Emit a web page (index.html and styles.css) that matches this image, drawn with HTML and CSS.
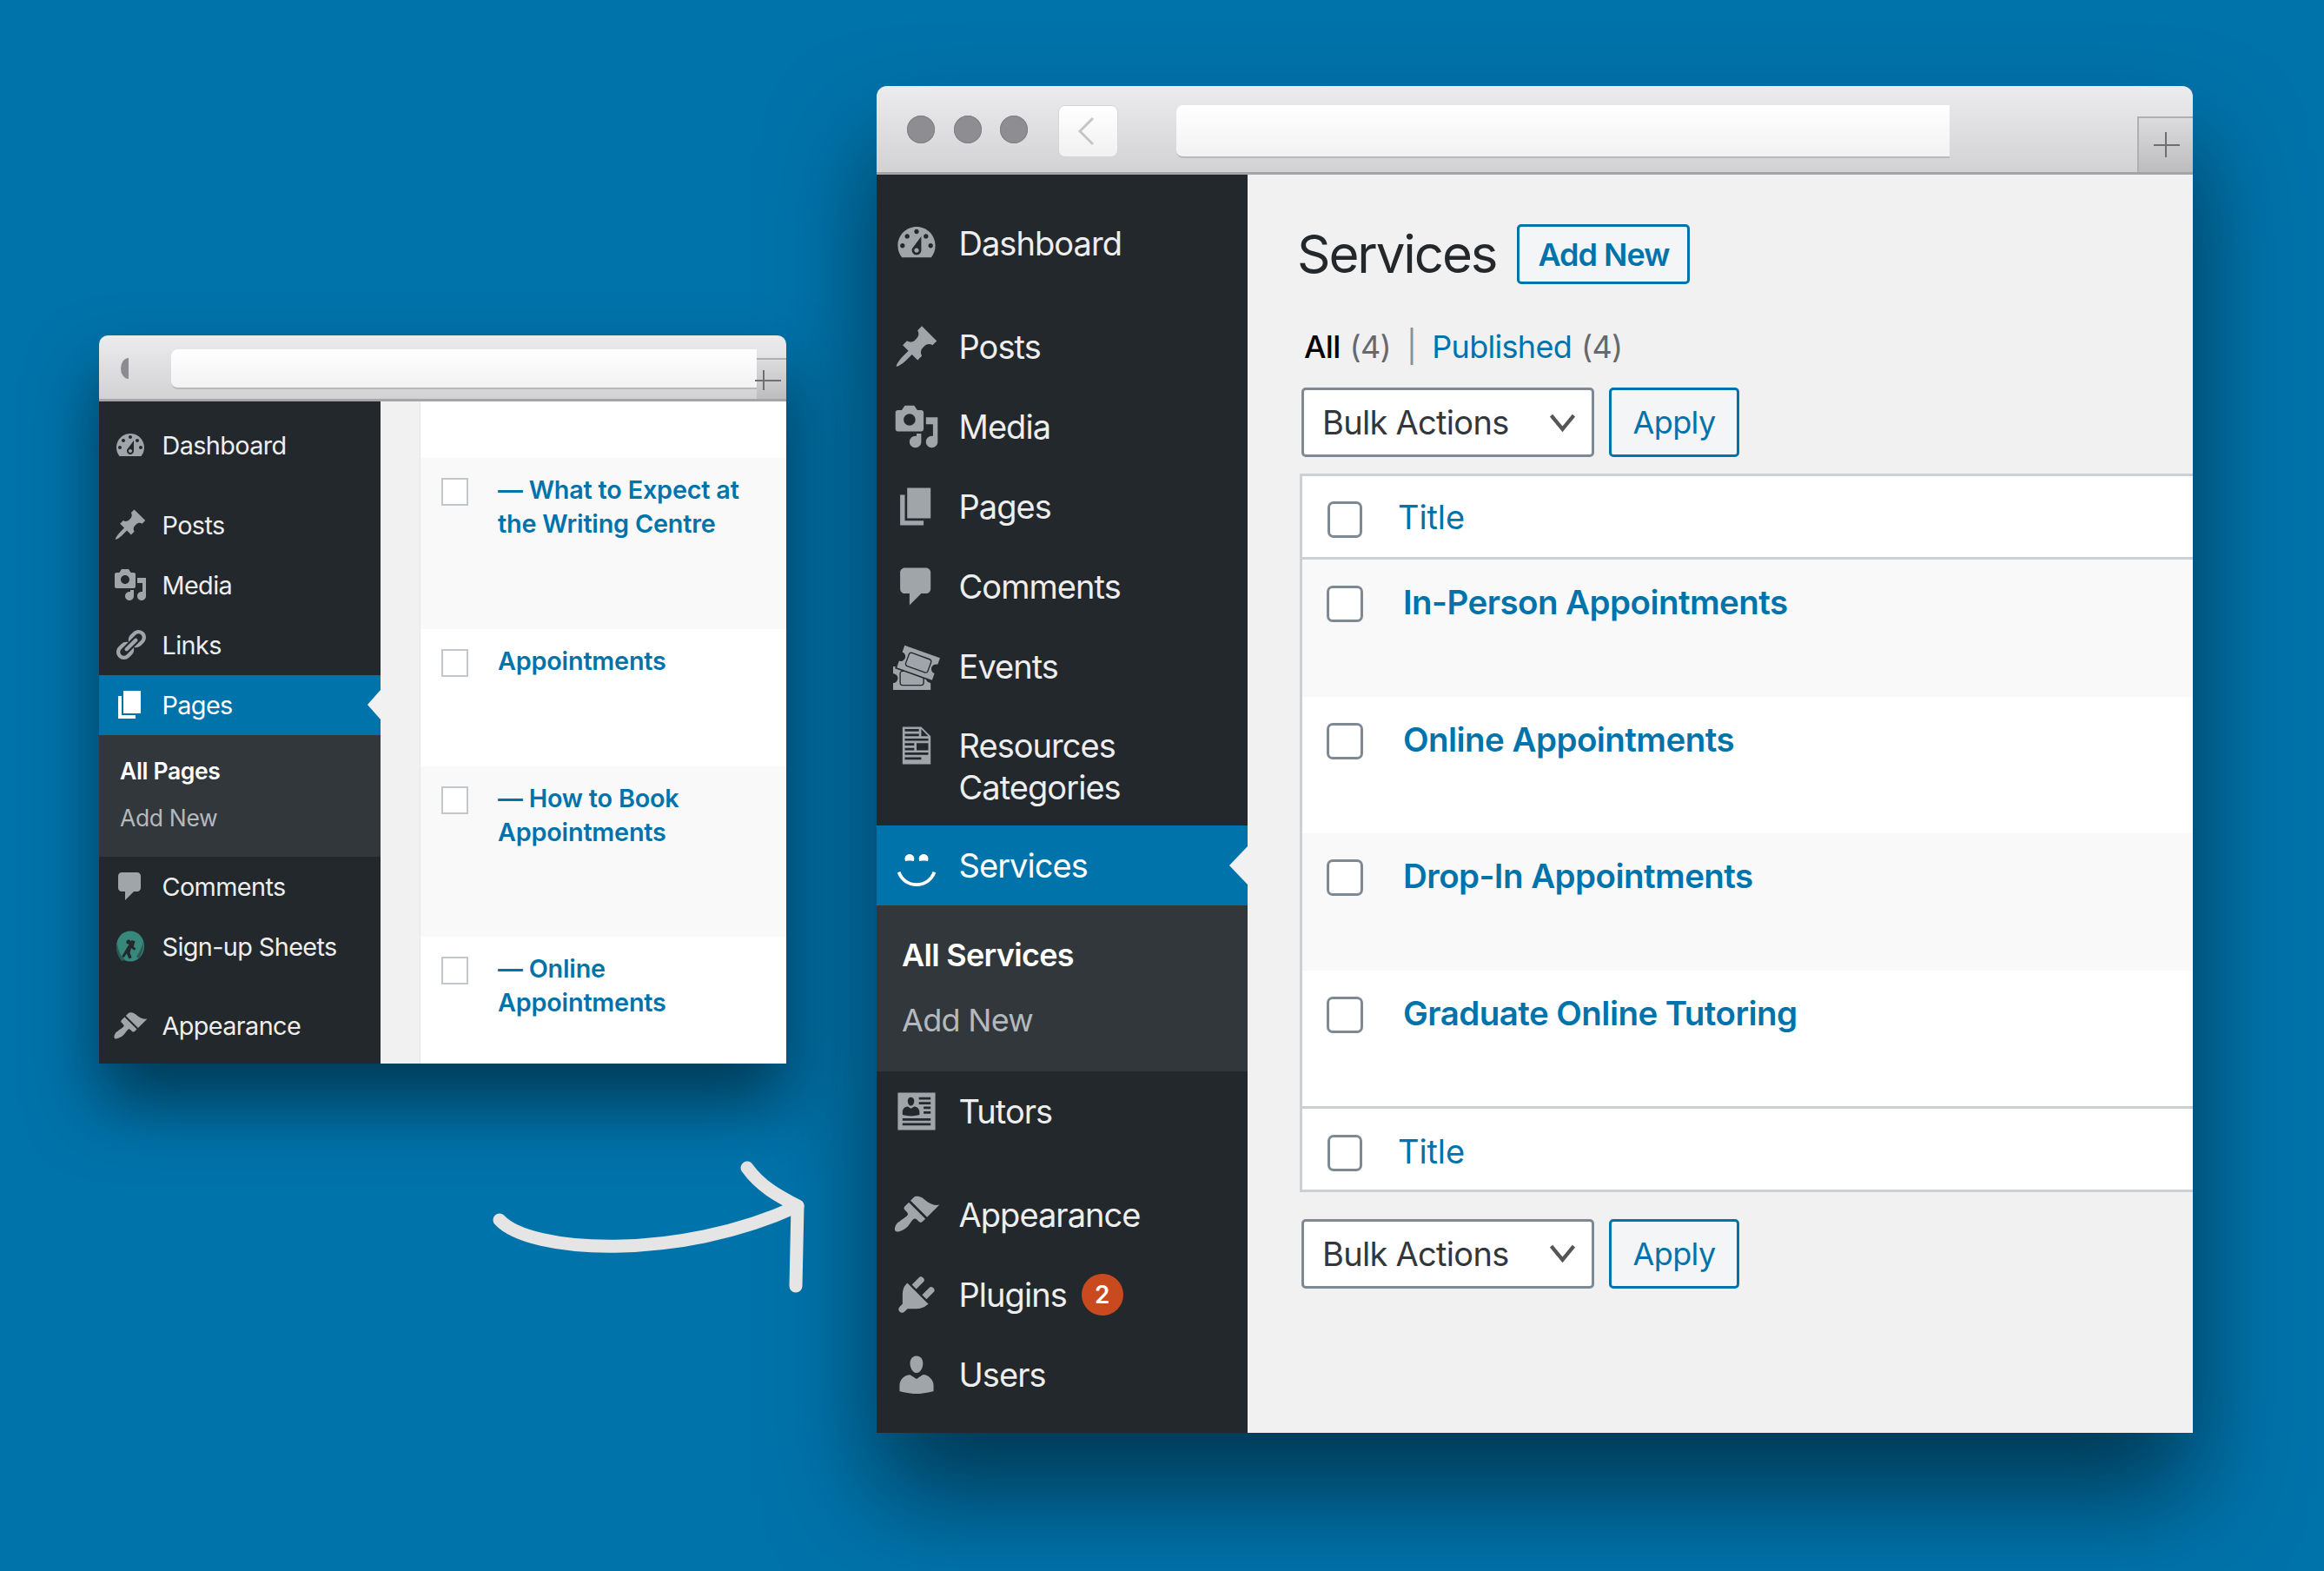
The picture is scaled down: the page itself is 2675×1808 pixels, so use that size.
FILE: index.html
```html
<!DOCTYPE html>
<html lang="en">
<head>
<meta charset="utf-8">
<title>Services</title>
<link rel="stylesheet" href="styles.css">
</head>
<body>
<svg class="sprite" aria-hidden="true">
  <symbol id="i-dashboard" viewBox="0 0 20 20"><path fill-rule="evenodd" d="M3.76 16h12.48c1.1-1.37 1.76-3.11 1.76-5 0-4.42-3.58-8-8-8s-8 3.58-8 8c0 1.89.66 3.63 1.76 5zM10 4c.55 0 1 .45 1 1s-.45 1-1 1-1-.45-1-1 .45-1 1-1zM6 6c.55 0 1 .45 1 1s-.45 1-1 1-1-.45-1-1 .45-1 1-1zm8 0c.55 0 1 .45 1 1s-.45 1-1 1-1-.45-1-1 .45-1 1-1zm-5.37 5.55L12 7v6c0 1.1-.9 2-2 2s-2-.9-2-2c0-.57.24-1.08.63-1.45zM4 10c.55 0 1 .45 1 1s-.45 1-1 1-1-.45-1-1 .45-1 1-1zm12 0c.55 0 1 .45 1 1s-.45 1-1 1-1-.45-1-1 .45-1 1-1zm-5 3c0-.55-.45-1-1-1s-1 .45-1 1 .45 1 1 1 1-.45 1-1z"/></symbol>
  <symbol id="i-post" viewBox="0 0 20 20"><path d="M10.44 3.02l1.82-1.82 6.36 6.35-1.83 1.82c-1.05-.68-2.48-.57-3.41.36l-.75.75c-.92.93-1.04 2.35-.35 3.41l-1.83 1.82-2.41-2.41-2.8 2.79c-.42.42-3.38 2.71-3.8 2.29s1.86-3.39 2.28-3.81l2.79-2.79L4.1 9.36l1.83-1.82c1.05.69 2.48.57 3.4-.36l.75-.75c.93-.92 1.05-2.35.36-3.41z"/></symbol>
  <symbol id="i-media" viewBox="0 0 20 20"><path fill-rule="evenodd" d="M13 11V4c0-.55-.45-1-1-1h-1.67L9 1H5L3.67 3H2c-.55 0-1 .45-1 1v7c0 .55.45 1 1 1h10c.55 0 1-.45 1-1zM7 4.5c1.38 0 2.5 1.12 2.5 2.5S8.38 9.5 7 9.5 4.5 8.38 4.5 7 5.62 4.5 7 4.5zM14 6h5v10.5c0 1.38-1.12 2.5-2.5 2.5S14 17.88 14 16.5s1.12-2.5 2.5-2.5c.17 0 .34.02.5.05V9h-3V6zm-4 8.05V13h2v3.5c0 1.38-1.12 2.5-2.5 2.5S7 17.88 7 16.5 8.12 14 9.5 14c.17 0 .34.02.5.05z"/></symbol>
  <symbol id="i-links" viewBox="0 0 20 20"><path d="M17.74 2.76c1.68 1.69 1.68 4.41 0 6.1l-1.53 1.52c-1.12 1.12-2.7 1.47-4.14 1.09l2.62-2.61.76-.77.76-.76c.84-.84.84-2.2 0-3.04-.84-.85-2.2-.85-3.04 0l-.77.76-3.38 3.38c-.37-1.44-.02-3.02 1.1-4.14l1.52-1.53c1.69-1.68 4.42-1.68 6.1 0zM8.59 13.43l5.34-5.34c.42-.42.42-1.1 0-1.52-.44-.43-1.13-.39-1.53 0l-5.33 5.34c-.42.42-.42 1.1 0 1.52.44.43 1.13.39 1.52 0zm-.76 2.29l4.14-4.15c.38 1.44.03 3.02-1.09 4.14l-1.52 1.53c-1.69 1.68-4.41 1.68-6.1 0-1.68-1.68-1.68-4.42 0-6.1l1.53-1.52c1.12-1.12 2.7-1.47 4.14-1.1l-4.14 4.15c-.85.84-.85 2.2 0 3.05.84.84 2.2.84 3.04 0z"/></symbol>
  <symbol id="i-page" viewBox="0 0 20 20"><path d="M6 15V2h10v13H6zm-1 1h8v2H3V5h2v11z"/></symbol>
  <symbol id="i-comments" viewBox="0 0 20 20"><path d="M5 2h9c1.1 0 2 .9 2 2v7c0 1.1-.9 2-2 2h-2l-5 5v-5H5c-1.1 0-2-.9-2-2V4c0-1.1.9-2 2-2z"/></symbol>
  <symbol id="i-tickets" viewBox="0 0 20 20"><path fill-rule="evenodd" d="M20 6.38L18.99 9.2v-.01c-.52-.19-1.03-.16-1.53.08s-.85.62-1.04 1.14-.16 1.03.07 1.53c.24.5.62.84 1.15 1.03v.01l-1.01 2.82-15.06-5.38.99-2.79c.52.19 1.03.16 1.53-.08.5-.23.84-.61 1.03-1.13s.16-1.03-.08-1.53c-.23-.49-.61-.83-1.13-1.02L4.93 1zm-4.97 5.69l1.37-3.76c.12-.31.1-.65-.04-.95s-.39-.53-.7-.65L8.14 3.98c-.64-.23-1.37.12-1.6.74L5.17 8.48c-.24.65.1 1.37.74 1.6l7.52 2.74c.14.05.28.08.43.08.52 0 1-.33 1.17-.83zM7.97 4.45l7.51 2.73c.19.07.34.21.43.39.08.18.09.38.02.57l-1.37 3.76c-.13.38-.58.59-.96.45L6.09 9.61c-.38-.14-.59-.57-.45-.96l1.37-3.76c.1-.29.39-.49.7-.49.09 0 .17.02.26.05zm6.82 12.14c.35.27.75.41 1.2.41H16v3H0v-2.96c.55 0 1.03-.2 1.41-.59.39-.38.59-.86.59-1.41s-.2-1.02-.59-1.41-.86-.59-1.41-.59V10h1.05l-.28.8 2.87 1.02c-.51.16-.89.62-.89 1.18v4c0 .69.56 1.25 1.25 1.25h8c.69 0 1.25-.56 1.25-1.25v-1.75l.83.3c.12.43.36.78.71 1.04zM3.25 17v-4c0-.41.34-.75.75-.75h.83l7.92 2.83V17c0 .41-.34.75-.75.75H4c-.41 0-.75-.34-.75-.75z"/></symbol>
  <symbol id="i-document" viewBox="0 0 20 20"><path fill-rule="evenodd" d="M12 2l4 4v12H4V2h8zM5 3v1h6V3H5zm7 3h3l-3-3v3zM5 5v1h6V5H5zm10 3V7H5v1h10zM5 9v1h4V9H5zm10 3V9h-5v3h5zM5 11v1h4v-1H5zm10 3v-1H5v1h10zm-3 2v-1H5v1h7z"/></symbol>
  <symbol id="i-smiley" viewBox="0 0 20 20"><path d="M7 5.2c1.1 0 2 .89 2 2 0 .37-.11.71-.28 1C8.72 8.2 8 8 7 8s-1.72.2-1.72.2c-.17-.29-.28-.63-.28-1 0-1.11.9-2 2-2zm6 0c1.11 0 2 .89 2 2 0 .37-.11.71-.28 1 0 0-.72-.2-1.72-.2s-1.72.2-1.72.2c-.17-.29-.28-.63-.28-1 0-1.11.89-2 2-2zm-3 13.7c3.72 0 7.03-2.36 8.23-5.88l-1.32-.46C15.9 15.52 13.12 17.5 10 17.5s-5.9-1.98-6.91-4.94l-1.32.46c1.2 3.52 4.51 5.88 8.23 5.88z"/></symbol>
  <symbol id="i-id" viewBox="0 0 20 20"><path fill-rule="evenodd" d="M18 18H2V2h16v16zM8.05 7.53c.13-.07.24-.15.33-.24.09-.1.17-.21.24-.34.07-.14.13-.26.17-.37s.07-.22.1-.34L8.95 6c0-.04.01-.07.01-.09.05-.32.03-.61-.04-.9-.08-.28-.23-.52-.46-.72C8.23 4.1 7.95 4 7.6 4c-.2 0-.39.04-.56.11-.17.08-.31.18-.41.3-.11.13-.2.27-.27.44-.07.16-.11.33-.12.51s0 .36.01.55l.02.09c.01.06.03.15.06.25s.06.21.1.33.1.25.17.37c.08.12.16.23.25.33s.2.19.34.25c.13.06.28.09.43.09s.3-.03.43-.09zM16 5V4h-5v1h5zm0 2V6h-5v1h5zM7.62 8.83l-1.38-.88c-.41 0-.79.11-1.14.32-.35.22-.62.5-.81.85-.19.34-.29.7-.29 1.07v1.25l.2.05c.13.04.31.09.55.14.24.06.51.12.8.17.29.06.62.1 1 .14.37.04.73.06 1.07.06s.69-.02 1.07-.06.7-.09.98-.14c.27-.05.54-.1.82-.17.27-.06.45-.11.54-.13.09-.03.16-.05.21-.06v-1.25c0-.36-.1-.72-.31-1.07s-.49-.64-.84-.86-.72-.33-1.11-.33zM16 9V8h-3v1h3zm0 2v-1h-3v1h3zm0 3v-1H4v1h12zm0 2v-1H4v1h12z"/></symbol>
  <symbol id="i-appearance" viewBox="0 0 20 20"><path d="M14.48 11.06L7.41 3.99l1.5-1.5c.5-.56 2.3-.47 3.51.32 1.21.8 1.43 1.28 2.91 2.1 1.18.64 2.45 1.26 4.45.85zm-.71.71L6.7 4.7 4.93 6.47c-.39.39-.39 1.02 0 1.41l1.06 1.06c.39.39.39 1.03 0 1.42-.6.6-1.43 1.11-2.21 1.69-.35.26-.7.53-1.01.84C1.43 13.23.1 16.07.98 16.95c.88.88 3.72-.45 5.06-1.79.31-.31.58-.66.84-1.01.58-.78 1.09-1.61 1.69-2.21.39-.39 1.03-.39 1.42 0l1.06 1.06c.39.39 1.02.39 1.41 0z"/></symbol>
  <symbol id="i-plugins" viewBox="0 0 20 20"><path d="M13.11 4.36L9.87 7.6 8 5.73l3.24-3.24c.35-.34 1.05-.2 1.56.32.52.51.66 1.21.31 1.55zm-8 1.77l.91-1.12 9.01 9.01-1.19.84c-.71.71-2.63 1.16-3.82 1.16H6.14L4.9 17.26c-.59.59-1.54.59-2.12 0-.59-.58-.59-1.53 0-2.12l1.24-1.24v-3.88c0-1.13.4-3.19 1.09-3.89zm7.26 3.97l3.24-3.24c.34-.35 1.04-.21 1.55.31.52.51.66 1.21.31 1.55l-3.24 3.25z"/></symbol>
  <symbol id="i-users" viewBox="0 0 20 20"><path d="M10 9.25c-2.27 0-2.73-3.44-2.73-3.44C7 4.02 7.82 2 9.97 2c2.16 0 2.98 2.02 2.71 3.81 0 0-.41 3.44-2.68 3.44zm0 2.57L12.72 10c2.39 0 4.52 2.33 4.52 4.53v2.49s-3.65 1.13-7.24 1.13c-3.65 0-7.24-1.13-7.24-1.13v-2.49c0-2.25 1.94-4.48 4.47-4.48z"/></symbol>
  <symbol id="i-signup" viewBox="0 0 20 20"><ellipse cx="10" cy="10" rx="8" ry="8.800" fill="#37877a"/><path d="M2.500 8C3 12 4 15 7 18l-2 .5C2 15 1.500 11 2.500 8zM17.500 7c.5 3.500-.5 7-2.500 10l-1.500-1c2-3 3.500-6 4-9z" fill="#2a5c56"/><path d="M10.800 6.500l2 .6-.9 3 1.300 1.300-1 1-1.700-1.400-.7 2.800 1 2.800-1.600.5-1.300-3-1.700 2.500-1-.9 2.600-4.500z" fill="#23282d"/><circle cx="9" cy="7.500" r="1.300" fill="#23282d"/></symbol>
  <symbol id="i-chevron" viewBox="0 0 20 20"><path d="M3 5.500l7 8.500 7-8.500" fill="none" stroke="currentColor" stroke-width="2.300"/></symbol>
</svg>

<main class="desk">

  <section class="win win-small">
    <header class="chrome chrome-small">
      <span class="back-half"></span>
      <span class="url url-small"></span>
      <span class="plus plus-small"></span>
    </header>
    <div class="app">
      <nav class="side side-small">
        <a class="item"><svg class="ic"><use href="#i-dashboard"/></svg><span>Dashboard</span></a>
        <a class="item sep"><svg class="ic"><use href="#i-post"/></svg><span>Posts</span></a>
        <a class="item"><svg class="ic"><use href="#i-media"/></svg><span>Media</span></a>
        <a class="item"><svg class="ic"><use href="#i-links"/></svg><span>Links</span></a>
        <a class="item active"><svg class="ic"><use href="#i-page"/></svg><span>Pages</span></a>
        <div class="sub">
          <a class="sub-on">All Pages</a>
          <a class="sub-off">Add New</a>
        </div>
        <a class="item"><svg class="ic"><use href="#i-comments"/></svg><span>Comments</span></a>
        <a class="item"><svg class="ic"><use href="#i-signup"/></svg><span>Sign-up Sheets</span></a>
        <a class="item sep"><svg class="ic"><use href="#i-appearance"/></svg><span>Appearance</span></a>
      </nav>
      <div class="gutter"></div>
      <div class="panel">
        <div class="p-row p-alt p-tall"><input class="p-check" type="checkbox"><a class="p-title">— What to Expect at the Writing Centre</a></div>
        <div class="p-row p-short"><input class="p-check" type="checkbox"><a class="p-title">Appointments</a></div>
        <div class="p-row p-alt p-tall"><input class="p-check" type="checkbox"><a class="p-title">— How to Book Appointments</a></div>
        <div class="p-row"><input class="p-check" type="checkbox"><a class="p-title">— Online Appointments</a></div>
      </div>
    </div>
  </section>

  <svg class="arrow" viewBox="0 0 380 170" aria-hidden="true">
    <path d="M15 74C50 112 220 122 358 58"/>
    <path d="M300 14C315 35 335 46 358 58L356 150"/>
  </svg>

  <section class="win win-big">
    <header class="chrome chrome-big">
      <span class="lights"><i class="light"></i><i class="light"></i><i class="light"></i></span>
      <span class="back"><svg viewBox="0 0 20 34" class="back-ic"><path d="M18 2L3 17l15 15"/></svg></span>
      <span class="url url-big"></span>
      <span class="plus plus-big"></span>
    </header>
    <div class="app">
      <nav class="side side-big">
        <a class="item"><svg class="ic"><use href="#i-dashboard"/></svg><span>Dashboard</span></a>
        <a class="item sep"><svg class="ic"><use href="#i-post"/></svg><span>Posts</span></a>
        <a class="item"><svg class="ic"><use href="#i-media"/></svg><span>Media</span></a>
        <a class="item"><svg class="ic"><use href="#i-page"/></svg><span>Pages</span></a>
        <a class="item"><svg class="ic"><use href="#i-comments"/></svg><span>Comments</span></a>
        <a class="item"><svg class="ic"><use href="#i-tickets"/></svg><span>Events</span></a>
        <a class="item item-two"><svg class="ic"><use href="#i-document"/></svg><span>Resources<br>Categories</span></a>
        <a class="item active"><svg class="ic"><use href="#i-smiley"/></svg><span>Services</span></a>
        <div class="sub">
          <a class="sub-on">All Services</a>
          <a class="sub-off">Add New</a>
        </div>
        <a class="item"><svg class="ic"><use href="#i-id"/></svg><span>Tutors</span></a>
        <a class="item sep"><svg class="ic"><use href="#i-appearance"/></svg><span>Appearance</span></a>
        <a class="item"><svg class="ic"><use href="#i-plugins"/></svg><span>Plugins</span><b class="badge">2</b></a>
        <a class="item"><svg class="ic"><use href="#i-users"/></svg><span>Users</span></a>
      </nav>
      <div class="content">
        <div class="head">
          <h1 class="h1">Services</h1>
          <a class="btn btn-add">Add New</a>
        </div>
        <p class="filters"><b class="f-all">All</b> <span class="f-n">(4)</span><span class="f-bar">|</span><a class="f-link">Published</a> <span class="f-n">(4)</span></p>
        <div class="bar">
          <div class="select"><span>Bulk Actions</span><svg class="chev"><use href="#i-chevron"/></svg></div>
          <a class="btn btn-apply">Apply</a>
        </div>
        <div class="table">
          <div class="t-head"><input class="check check-h" type="checkbox"><a class="t-col">Title</a></div>
          <div class="t-row t-alt"><input class="check" type="checkbox"><a class="t-title">In-Person Appointments</a></div>
          <div class="t-row"><input class="check" type="checkbox"><a class="t-title">Online Appointments</a></div>
          <div class="t-row t-alt"><input class="check" type="checkbox"><a class="t-title">Drop-In Appointments</a></div>
          <div class="t-row t-last"><input class="check" type="checkbox"><a class="t-title">Graduate Online Tutoring</a></div>
          <div class="t-head t-foot"><input class="check check-h" type="checkbox"><a class="t-col">Title</a></div>
        </div>
        <div class="bar bar-bottom">
          <div class="select"><span>Bulk Actions</span><svg class="chev"><use href="#i-chevron"/></svg></div>
          <a class="btn btn-apply">Apply</a>
        </div>
      </div>
    </div>
  </section>

</main>
</body>
</html>
```

FILE: styles.css
```css
* { box-sizing: border-box; }
html, body { margin: 0; padding: 0; }
body {
  background: #0073aa;
  font-family: Inter, "Liberation Sans", sans-serif;
}
.sprite { display: none; }
.desk { position: relative; width: 2675px; height: 1808px; overflow: hidden; }

/* windows on the free canvas */
.win { position: absolute; display: flex; flex-direction: column; overflow: hidden; }
.win-big {
  left: 1009px; top: 99px; width: 1515px; height: 1550px;
  border-radius: 12px 12px 0 0;
}
.win-small {
  left: 114px; top: 386px; width: 791px; height: 838px;
  border-radius: 10px 10px 0 0;
}
.desk::before, .desk::after { content: ""; position: absolute; border-radius: 12px 12px 0 0; }
.desk::before { left: 1009px; top: 99px; width: 1515px; height: 1550px; box-shadow: 0 70px 120px rgba(0, 0, 0, .52); }
.desk::after { left: 114px; top: 386px; width: 791px; height: 838px; box-shadow: 0 45px 80px rgba(0, 0, 0, .5); }

.arrow {
  position: absolute; left: 560px; top: 1330px; width: 380px; height: 170px;
  fill: none; stroke: #e5e5e5; stroke-width: 15; stroke-linecap: round; stroke-linejoin: round;
}

/* browser chrome */
.chrome {
  position: relative; flex: none; display: flex; align-items: flex-start;
  background: linear-gradient(#ececee, #d2d1d4);
  border-bottom: 3px solid #a5a5a7;
}
.chrome-big { height: 102px; padding: 22px 0 0 35px; }
.chrome-small { height: 76px; padding: 16px 0 0 25px; }
.lights { display: flex; gap: 21.5px; margin-top: 12px; }
.light { width: 32px; height: 32px; border-radius: 50%; background: #8e8e92; box-shadow: inset 0 0 0 1px #808084; }
.back {
  display: flex; align-items: center; justify-content: center;
  width: 69px; height: 60px; margin-left: 35px;
  background: linear-gradient(#fff, #f1f1f1); border-radius: 8px; border: 1px solid #d5d5d7;
}
.back-ic { width: 20px; height: 34px; margin-left: -6px; fill: none; stroke: #c6c6c8; stroke-width: 3; }
.back-half {
  width: 9px; height: 24px; margin-top: 10px; background: #8b8b90;
  border-radius: 9px 0 0 9px / 12px 0 0 12px;
}
.url { background: linear-gradient(#fff, #f2f2f2); border-bottom: 2px solid #b9b9bb; }
.url-big { width: 890px; height: 61px; margin-left: 67px; border-radius: 8px 0 0 8px; }
.url-small { width: 674px; height: 46px; margin-left: 49px; border-radius: 8px 0 0 8px; }
.plus {
  position: absolute; right: 0; bottom: 0;
  background: linear-gradient(#dcdcde, #bdbdbf); border: 2px solid #b0b0b2; border-width: 2px 0 0 2px;
}
.plus::before, .plus::after { content: ""; position: absolute; background: #6f6f72; }
.plus-big { width: 64px; height: 64px; }
.plus-big::before { left: 17px; right: 15px; top: 30px; height: 2px; }
.plus-big::after { top: 16px; bottom: 17px; left: 30px; width: 2px; }
.plus-small { width: 34px; height: 47px; border-left: 0; }
.plus-small::before { left: -2px; right: 6px; top: 23px; height: 2px; }
.plus-small::after { top: 12px; bottom: 10px; left: 7px; width: 2px; }

/* admin layout */
.app { flex: 1; display: flex; min-height: 0; background: #f1f1f1; }
.side { flex: none; background: #23282d; color: #eee; }
.side-big { width: 427px; padding-top: 33px; font-size: 38px; letter-spacing: -.95px; }
.side-small { width: 324px; padding-top: 16px; font-size: 28.8px; letter-spacing: -.6px; }

.item { position: relative; display: flex; align-items: center; }
.ic { flex: none; fill: #a0a5aa; }
.side-big .item { height: 92px; padding-left: 19px; line-height: 48px; }
.side-big .ic { width: 54px; height: 54px; margin-right: 21.5px; }
.side-big .sep { margin-top: 27px; }
.side-big .item-two { height: 137px; }
.side-big .item-two .ic { align-self: flex-start; margin-top: 18px; }
.side-small .item { height: 69px; padding-left: 16px; }
.side-small .ic { width: 40px; height: 40px; margin-right: 16.5px; }
.side-small .sep { margin-top: 22.5px; }

.active { background: #0073aa; color: #fff; }
.active .ic { fill: #fff; }
.active::after {
  content: ""; position: absolute; right: 0; top: 50%; width: 0; height: 0;
  border-style: solid; border-color: transparent #f1f1f1 transparent transparent;
}
.side-big .active::after { margin-top: -22px; border-width: 22px 21px 22px 0; }
.side-small .active::after { margin-top: -17px; border-width: 17px 15px 17px 0; }

.sub { display: flex; flex-direction: column; background: #32373c; }
.sub-on { color: #fff; font-weight: 600; }
.sub-off { color: #b4b9be; }
.side-big .sub { height: 191px; padding: 35px 0 0 29px; font-size: 36px; gap: 31px; line-height: 44px; letter-spacing: -.7px; }
.side-small .sub { height: 140px; padding: 25px 0 0 24px; font-size: 26.5px; gap: 22px; line-height: 32px; letter-spacing: -.35px; }

.badge {
  display: flex; align-items: center; justify-content: center;
  width: 48px; height: 48px; margin-left: 17px; border-radius: 50%;
  background: #ca4a1f; color: #fff; font-size: 28px; font-weight: 600; letter-spacing: 0;
}

/* small window content */
.gutter { flex: none; width: 46px; background: #f1f1f1; border-right: 1px solid #e5e5e5; }
.panel { flex: 1; background: #fff; padding-top: 65px; }
.p-row { display: flex; align-items: flex-start; height: 146px; padding: 17px 22px 0 24px; font-size: 28.8px; line-height: 39px; font-weight: 600; letter-spacing: -.2px; }
.p-tall { height: 196.5px; }
.p-short { height: 158px; }
.p-alt { background: #f9f9f9; }
.p-check {
  appearance: none; flex: none; width: 31px; height: 32px; margin: 6px 34px 0 0;
  background: #fff; border: 2px solid #c4c7ca;
}
.p-title { color: #0073aa; }

/* big window content */
.content { flex: 1; min-width: 0; padding: 57px 0 0 60px; }
.head { display: flex; align-items: center; gap: 24px; height: 69px; }
.h1 { margin: 0 0 0 -3px; font-size: 60px; font-weight: 400; color: #23282d; line-height: 69px; letter-spacing: -2.1px; }
.btn {
  display: flex; align-items: center; justify-content: center;
  background: #f3f5f6; color: #0073aa; border: 3px solid #0073aa; border-radius: 5px;
  font-size: 36px;
}
.btn-add { width: 199px; height: 69px; font-weight: 600; letter-spacing: -1px; }
.btn-apply { width: 150px; height: 80px; letter-spacing: -.6px; }
.filters { margin: 49px 0 0 5px; font-size: 36px; line-height: 46px; letter-spacing: -.7px; color: #646970; display: flex; gap: 11px; }
.f-all { color: #000; font-weight: 500; }
.f-bar { margin: 0 7px; color: #8c8f94; }
.f-link { color: #0073aa; }
.bar { display: flex; gap: 17px; margin: 24px 0 0 2px; }
.bar-bottom { margin-top: 31px; }
.select {
  display: flex; align-items: center; justify-content: space-between;
  width: 337px; height: 80px; padding: 0 15px 0 21px;
  background: #fff; border: 3px solid #7e8993; border-radius: 5px;
  color: #32373c; font-size: 38px; letter-spacing: -.7px;
}
.chev { width: 37px; height: 37px; color: #555; }
.table { margin-top: 19px; border: 3px solid #ccd0d4; border-right: 0; background: #fff; }
.t-head { display: flex; align-items: center; height: 96px; padding: 0 0 0 29px; border-bottom: 3px solid #ccd0d4; }
.t-foot { height: 93px; padding-top: 6px; border-bottom: 0; }
.t-col { margin-left: 41px; font-size: 38px; color: #0073aa; letter-spacing: -.1px; }
.t-row { display: flex; align-items: flex-start; height: 157.5px; padding: 26px 0 0 28px; }
.t-alt { background: #f9f9f9; }
.t-last { height: 159px; border-bottom: 3px solid #ccd0d4; }
.check {
  appearance: none; flex: none; width: 42px; height: 42px; margin: 4px 0 0;
  background: #fff; border: 3px solid #7e8993; border-radius: 7px;
}
.check-h { width: 40px; }
.t-head .check { margin-top: 7px; }
.t-foot .check { margin-top: 4px; }
.t-title { margin-left: 46px; font-size: 38.5px; line-height: 46px; font-weight: 600; color: #0073aa; letter-spacing: -.55px; }
```
